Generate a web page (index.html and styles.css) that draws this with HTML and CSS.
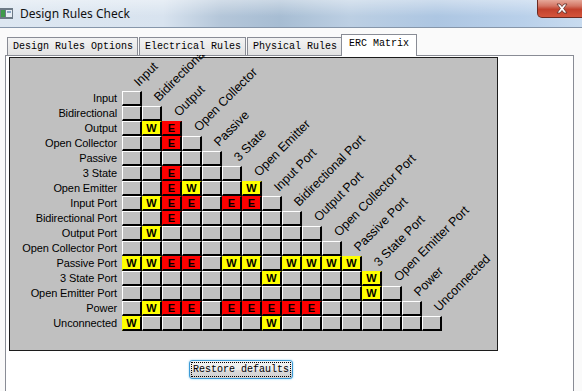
FILE: index.html
```html
<!DOCTYPE html>
<html lang="en">
<head>
    <meta charset="UTF-8">
    <title>Design Rules Check</title>
    <link rel="stylesheet" href="styles.css">
</head>
<body>
    <div class="window">
        <div class="titlebar">
            <svg class="appicon" width="13" height="11" viewBox="0 0 13 11">
                <rect x="0" y="0" width="13" height="11" fill="#6d7a86"/>
                <rect x="1" y="2" width="4" height="7" fill="#3f9a4a"/>
                <rect x="6" y="2" width="6" height="7" fill="#e8eef4"/>
                <rect x="7" y="3" width="4" height="2" fill="#8aa6c4"/>
            </svg>
            <span class="title">Design Rules Check</span>
            <div class="close">
                <svg width="14" height="11" viewBox="0 0 14 11">
                    <path d="M2 1 L5 1 L7 3.5 L9 1 L12 1 L8.6 5.5 L12 10 L9 10 L7 7.5 L5 10 L2 10 L5.4 5.5 Z" fill="#fff" stroke="#5a2a24" stroke-width="0.8"/>
                </svg>
            </div>
        </div>
        <div class="tabs">
            <div class="tab">Design Rules Options</div>
            <div class="tab">Electrical Rules</div>
            <div class="tab">Physical Rules</div>
            <div class="tab active">ERC Matrix</div>
        </div>
        <div class="panel">
            <div class="matrix" id="matrix"></div>
            <button class="restore"><span class="focus">Restore defaults</span></button>
        </div>
    </div>
    <script>
    const names = ['Input', 'Bidirectional', 'Output', 'Open Collector', 'Passive', '3 State',
      'Open Emitter', 'Input Port', 'Bidirectional Port', 'Output Port', 'Open Collector Port',
      'Passive Port', '3 State Port', 'Open Emitter Port', 'Power', 'Unconnected'];
    // one string per row: . = no report, W = warning, E = error
    const rules = [
      '.',
      '..',
      '.WE',
      '..E.',
      '.....',
      '..E...',
      '..EW..W',
      '.WEE.EE.',
      '..E......',
      '.W........',
      '...........',
      'WWEE.WW.WWWW',
      '.......W....W',
      '............W.',
      '.WEE.EEEEE.....',
      'W......W........'
    ];
    const matrix = document.getElementById('matrix');

    function header(text) {
      const hd = document.createElement('span');
      hd.className = 'hd';
      const t = document.createElement('span');
      t.className = 'hdt';
      t.textContent = text;
      hd.appendChild(t);
      return hd;
    }

    const headRow = document.createElement('div');
    headRow.className = 'row first';
    const sp = document.createElement('span');
    sp.className = 'lbl';
    headRow.appendChild(sp);
    headRow.appendChild(header(names[0]));
    matrix.appendChild(headRow);

    rules.forEach((r, i) => {
      const row = document.createElement('div');
      row.className = 'row';
      const lbl = document.createElement('span');
      lbl.className = 'lbl';
      lbl.textContent = names[i];
      row.appendChild(lbl);
      r.split('').forEach(c => {
        const cell = document.createElement('span');
        cell.className = 'cell';
        if (c === 'W') { cell.className += ' warn'; cell.textContent = 'W'; }
        if (c === 'E') { cell.className += ' err'; cell.textContent = 'E'; }
        row.appendChild(cell);
      });
      if (names[i + 1]) row.appendChild(header(names[i + 1]));
      matrix.appendChild(row);
    });
    </script>
</body>
</html>
```

FILE: styles.css
```css
body { margin: 0; font-family: "Liberation Sans", Arial, sans-serif; background: #fff; }
.window { width: 582px; height: 391px; overflow: hidden; background: #fafafa; }

.titlebar { height: 27px; border-bottom: 1px solid #8696aa; display: flex; align-items: flex-start;
  background: linear-gradient(to bottom, rgba(255,255,255,0.4), rgba(255,255,255,0) 60%),
    linear-gradient(to right, #dde7f1 0%, #d8e3ef 28%, #b4c6d9 38%, #a7bdd3 48%, #bccfe3 60%, #adc6e2 75%, #b9d0ea 90%, #c8dbef 100%); }
.appicon { margin: 8px 0 0 0; }
.title { margin: 5px 0 0 7px; font-family: "Noto Sans", sans-serif; font-size: 12px; color: #111; }
.close { margin-left: auto; margin-right: -4px; width: 49px; height: 18px; box-sizing: border-box;
  border: 1px solid #6a2a22; border-top: 0; border-radius: 0 0 0 5px;
  background: linear-gradient(to bottom, #e6a899 0%, #d37564 35%, #c2412d 55%, #d4553c 100%);
  display: flex; align-items: center; justify-content: center; }

.tabs { height: 22px; margin-top: 6px; padding-left: 7px; display: flex; align-items: flex-end;
  margin-bottom: -1px; position: relative; z-index: 1; }
.tab { height: 18px; box-sizing: border-box; padding: 0 4px 0 5px; margin: 0 1px 1px 0;
  border: 1px solid #898c95; border-bottom: 0; line-height: 18px;
  font-family: "Liberation Mono", monospace; font-size: 10px; color: #000;
  background: linear-gradient(to bottom, #f3f3f3, #e2e2e2); white-space: nowrap; }
.tab.active { height: 22px; margin: 0 0 0 -2px; padding: 0 7px; background: #fff; line-height: 18px; }

.panel { margin-left: 5px; width: 569px; height: 340px; box-sizing: border-box;
  border: 1px solid #898c95; background: #fff; }

.matrix { margin: 1px 0 0 3px; width: 489px; height: 294px; box-sizing: border-box;
  border: 1px solid #1c1c1c; background: #c0c0c0; padding-top: 33px; }
.row { display: flex; height: 15px; }
.row.first { height: 0; }
.lbl { width: 107px; margin-right: 5px; flex: none; text-align: right; font-size: 11px;
  letter-spacing: -0.1px; line-height: 15px; white-space: nowrap; color: #000; }
.cell { width: 20px; height: 15px; box-sizing: border-box; flex: none;
  border-top: 1px solid #fff; border-left: 1px solid #fff;
  border-right: 2px solid #000; border-bottom: 2px solid #000; background: #c0c0c0;
  font-weight: bold; font-size: 11px; line-height: 12px; text-align: center; color: #000; }
.cell.warn { background: #ffff00; border-top-color: #ffff00; border-left-color: #ffff00; }
.cell.err { background: #ff0000; border-top-color: #ff0000; border-left-color: #ff0000; }
.hd { width: 0; height: 100%; display: flex; align-items: flex-end; flex: none; }
.row.first .hd { height: 0; }
.hdt { display: block; margin: 0 0 2px 19px; font-size: 12.5px; line-height: 13px; white-space: nowrap;
  transform-origin: 0 100%; transform: rotate(-45deg); color: #000; }

.restore { margin: 9px 0 0 183px; width: 104px; height: 19px; padding: 0; box-sizing: border-box;
  border: 1px solid #3c9ad6; border-radius: 3px;
  background: linear-gradient(to bottom, #f4f4f4 0%, #ececec 50%, #dcdcdc 51%, #cfcfcf 100%);
  box-shadow: 0 0 2px #7fcaf0; font-family: "Liberation Mono", monospace; font-size: 10px; color: #000; }
.restore .focus { display: block; margin: 1px; line-height: 13px; border: 1px dotted #000; }
```
